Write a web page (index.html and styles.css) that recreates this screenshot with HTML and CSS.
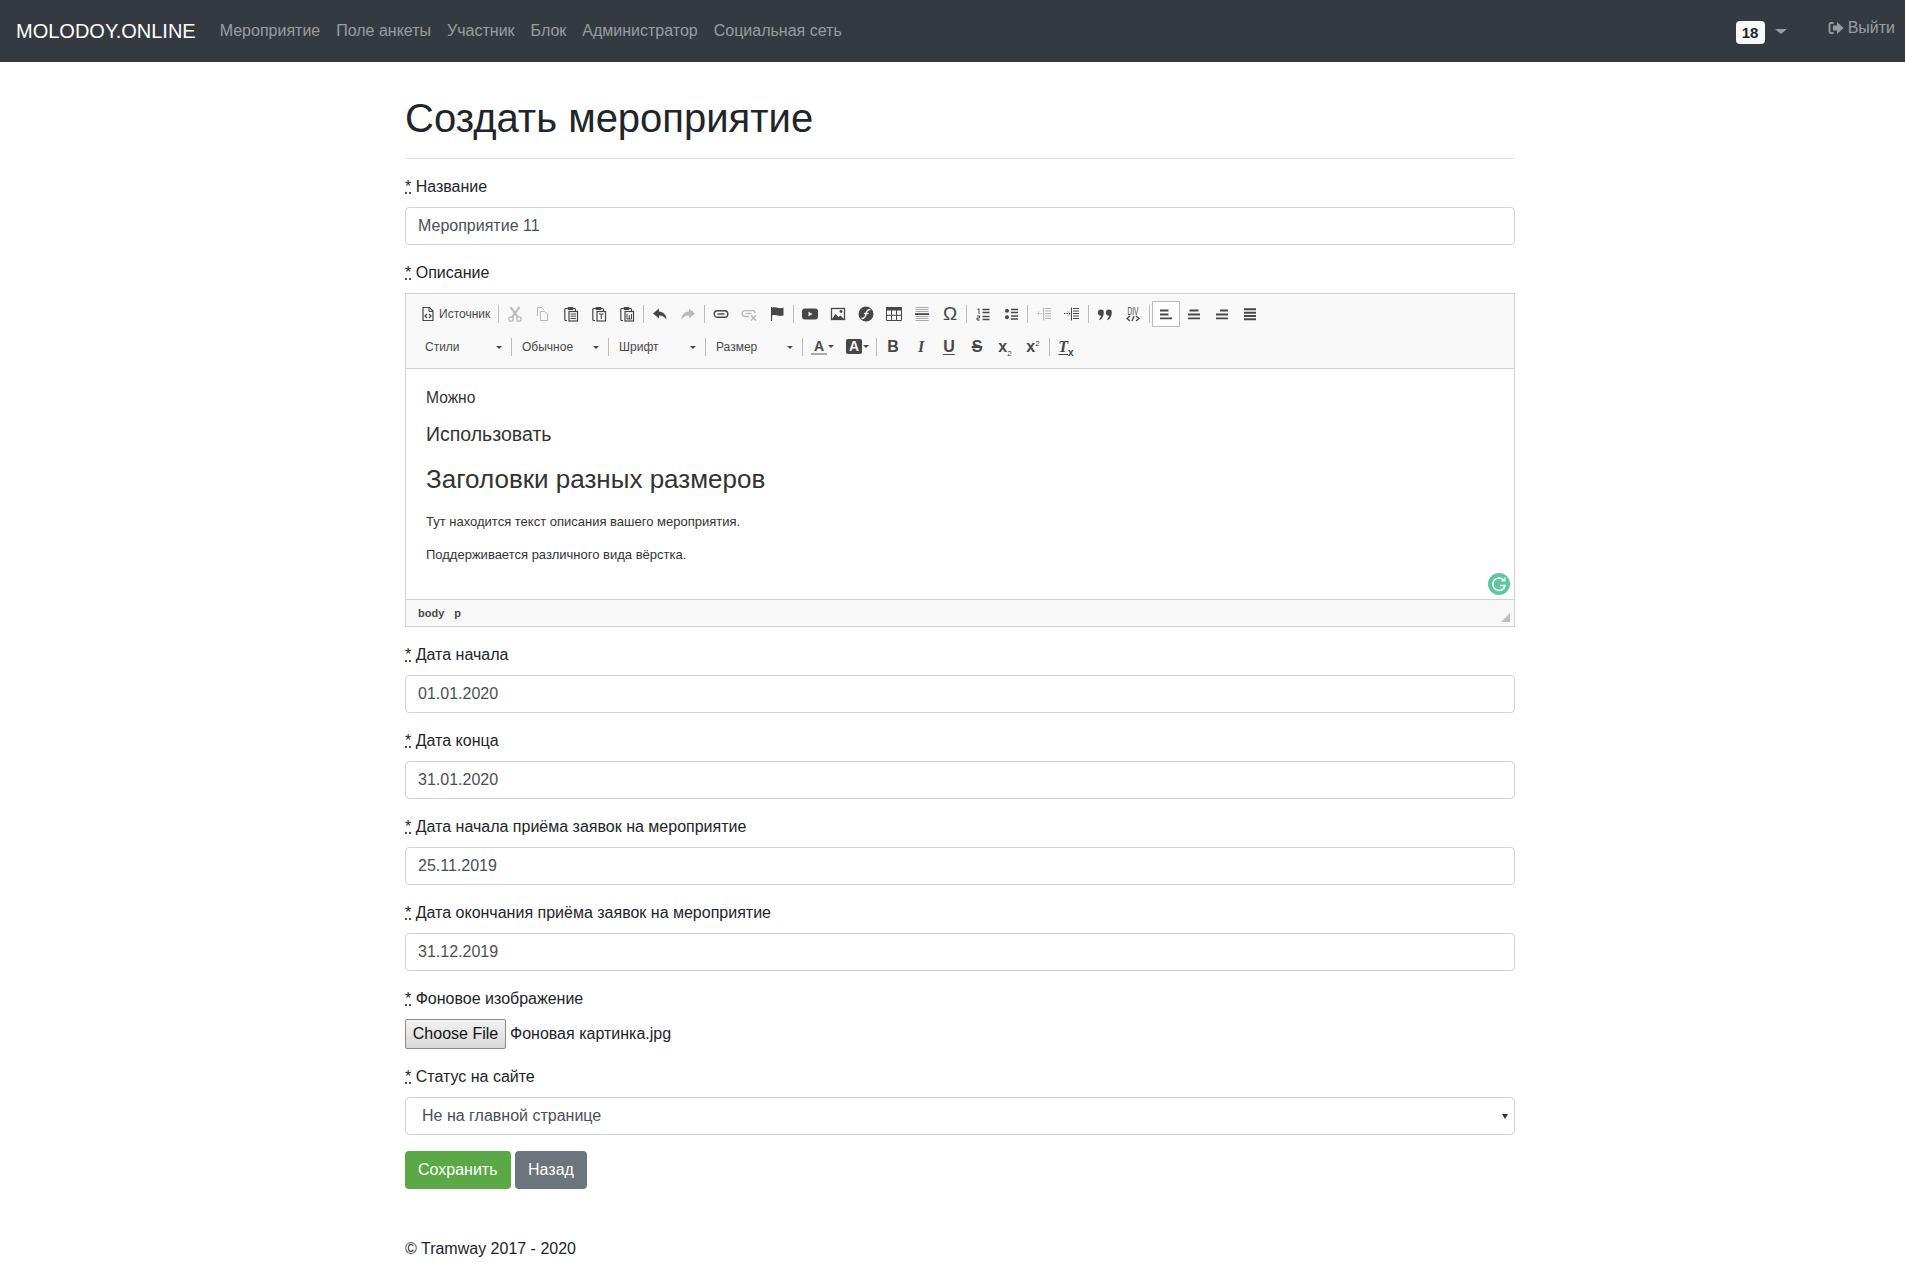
FILE: index.html
```html
<!DOCTYPE html>
<html lang="ru">
<head>
<meta charset="utf-8">
<title>Создать мероприятие</title>
<link rel="stylesheet" href="styles.css">
</head>
<body>
<svg class="sprite" width="0" height="0" aria-hidden="true">
<defs>
<symbol id="i-source" viewBox="0 0 16 16"><path d="M3 1.500h6.500L13 5v9.500H3z" fill="none" stroke="currentColor" stroke-width="1.200"/><path d="M9 1.500V5.500h4" fill="none" stroke="currentColor"/><path d="M7 8 5 10l2 2M9 8l2 2-2 2" fill="none" stroke="currentColor" stroke-width="1.300"/></symbol>
<symbol id="i-cut" viewBox="0 0 16 16"><circle cx="4" cy="13" r="2.200" fill="none" stroke="currentColor" stroke-width="1.300"/><circle cx="12" cy="13" r="2.200" fill="none" stroke="currentColor" stroke-width="1.300"/><path d="M5.200 11 12.500 1M10.800 11 3.500 1" stroke="currentColor" stroke-width="2" fill="none"/></symbol>
<symbol id="i-copy" viewBox="0 0 16 16"><path d="M2.500 10V1.500h4l2.500 2.500" fill="none" stroke="currentColor"/><path d="M5.500 5.500h4l3 3v6h-7z" fill="none" stroke="currentColor"/></symbol>
<symbol id="i-paste" viewBox="0 0 16 16"><path d="M4 14.500H2.800a1 1 0 0 1-1-1v-10a1 1 0 0 1 1-1H5M10 2.500h1.500a1 1 0 0 1 1 1V5" fill="none" stroke="currentColor" stroke-width="1.200"/><rect x="4.500" y="1" width="6" height="3" rx="1" fill="currentColor"/><rect x="6" y="5.500" width="8.500" height="9.500" fill="none" stroke="currentColor" stroke-width="1.200"/><path d="M7.500 8h5.500M7.500 10.200h5.500M7.500 12.500h5.500" stroke="currentColor"/></symbol>
<symbol id="i-paste-t" viewBox="0 0 16 16"><path d="M4 14.500H2.800a1 1 0 0 1-1-1v-10a1 1 0 0 1 1-1H5M10 2.500h1.500a1 1 0 0 1 1 1V5" fill="none" stroke="currentColor" stroke-width="1.200"/><rect x="4.500" y="1" width="6" height="3" rx="1" fill="currentColor"/><rect x="6" y="5.500" width="8.500" height="9.500" fill="none" stroke="currentColor" stroke-width="1.200"/><path d="M8 8h4.500M10.250 8v5" stroke="currentColor" stroke-width="1.100"/></symbol>
<symbol id="i-paste-w" viewBox="0 0 16 16"><path d="M4 14.500H2.800a1 1 0 0 1-1-1v-10a1 1 0 0 1 1-1H5M10 2.500h1.500a1 1 0 0 1 1 1V5" fill="none" stroke="currentColor" stroke-width="1.200"/><rect x="4.500" y="1" width="6" height="3" rx="1" fill="currentColor"/><rect x="6" y="5.500" width="8.500" height="9.500" fill="none" stroke="currentColor" stroke-width="1.200"/><path d="M8 8v5h4.500V8M10.250 9v4" fill="none" stroke="currentColor"/></symbol>
<symbol id="i-undo" viewBox="0 0 16 16"><path d="M7 2.500 1 7.500l6 5V9.500c3-.2 5 .8 7.500 4C14.500 9 11.500 6 7 5.500z" fill="currentColor"/></symbol>
<symbol id="i-redo" viewBox="0 0 16 16"><path d="M9 2.500l6 5-6 5V9.500c-3-.2-5 .8-7.500 4C1.500 9 4.500 6 9 5.500z" fill="currentColor"/></symbol>
<symbol id="i-link" viewBox="0 0 16 16"><rect x="1.200" y="4.700" width="13.600" height="6.600" rx="3.300" fill="none" stroke="currentColor" stroke-width="1.400"/><path d="M4.500 8h7" stroke="currentColor" stroke-width="1.400"/></symbol>
<symbol id="i-unlink" viewBox="0 0 16 16"><path d="M8 10.500H4a2.900 2.900 0 0 1 0-5.800h7.500a2.900 2.900 0 0 1 2.700 2.500" fill="none" stroke="currentColor" stroke-width="1.300"/><path d="M4.500 7.500h6" stroke="currentColor" stroke-width="1.200"/><path d="M10 9.500l5 5M15 9.500l-5 5" stroke="currentColor" stroke-width="1.500"/></symbol>
<symbol id="i-anchor" viewBox="0 0 16 16"><path d="M2.500 1v14" stroke="currentColor" stroke-width="1.100"/><path d="M3 1.800c2-.8 4-.5 5.500 0s3.500.7 6 0V9.500c-2.500.7-4.500.5-6 0S5 8.700 3 9.500z" fill="currentColor"/></symbol>
<symbol id="i-youtube" viewBox="0 0 16 16"><rect y="2.500" width="16" height="11" rx="3" fill="currentColor"/><path d="M6.500 5.800v4.400L10.500 8z" fill="#f8f8f8"/></symbol>
<symbol id="i-image" viewBox="0 0 16 16"><rect x="1.500" y="2.500" width="13" height="11" fill="none" stroke="currentColor" stroke-width="1.300"/><path d="M2 13l3.500-5 3 3 2-1.500 3.500 3.500z" fill="currentColor"/><circle cx="11" cy="5.500" r="1.400" fill="currentColor"/></symbol>
<symbol id="i-flash" viewBox="0 0 16 16"><circle cx="8" cy="8" r="7.500" fill="currentColor"/><path d="M12.500 3.500C9 3.500 8.500 5.500 8 8s-1 4.500-4.500 4.500" fill="none" stroke="#f8f8f8" stroke-width="1.600"/><path d="M6 7.500h4.500" stroke="#f8f8f8" stroke-width="1.300"/></symbol>
<symbol id="i-table" viewBox="0 0 16 16"><rect x="0" y="1" width="16" height="3.500" fill="currentColor"/><path d="M.5 1.500h15v13H.5zM.5 9.300h15M5.500 4v10.500M10.500 4v10.500" fill="none" stroke="currentColor"/></symbol>
<symbol id="i-hr" viewBox="0 0 16 16"><path d="M1.500 1.500h13M1.500 3.500h13M1.500 5.500h13M1.500 10.500h13M1.500 12.500h13M1.500 14.500h13" stroke="#a8a8a8"/><rect x="1" y="7.200" width="14" height="1.800" fill="currentColor"/></symbol>
<symbol id="i-ol" viewBox="0 0 16 16"><path d="M7.500 3.500h7M7.500 6.500h7M7.500 10.500h7M7.500 13.500h7" stroke="currentColor" stroke-width="1.300"/><path d="M2.500 3.500 4 2.800v5M2 10h2.500v2H2v2h2.800" fill="none" stroke="currentColor"/></symbol>
<symbol id="i-ul" viewBox="0 0 16 16"><circle cx="4" cy="4.700" r="2" fill="currentColor"/><circle cx="4" cy="11.300" r="2" fill="currentColor"/><path d="M8 3.500h7M8 6.500h7M8 10h7M8 13h7" stroke="currentColor" stroke-width="1.300"/></symbol>
<symbol id="i-outdent" viewBox="0 0 16 16"><path d="M9 2.500h6M9 5h6M9 7.500h6M9 10h6M9 12.500h6M7.500 1.500v13" stroke="currentColor"/><path d="M6 7.500H1M3 5.500l-2 2 2 2" fill="none" stroke="currentColor" stroke-dasharray="1.500 1"/></symbol>
<symbol id="i-indent" viewBox="0 0 16 16"><path d="M9 2.500h6M9 5h6M9 7.500h6M9 10h6M9 12.500h6M7.500 1.500v13" stroke="currentColor"/><path d="M0 7.500h6M4 5.500l2 2-2 2" fill="none" stroke="currentColor" stroke-dasharray="1.500 1"/></symbol>
<symbol id="i-quote" viewBox="0 0 16 16"><path d="M3.800 3.500a3 3 0 0 1 3 3.200c0 3-1.500 6-4 7.500l-.7-.8c1.300-1.300 1.800-2.500 2-3.900A3 3 0 0 1 3.800 3.500zM11.800 3.500a3 3 0 0 1 3 3.200c0 3-1.500 6-4 7.500l-.7-.8c1.300-1.300 1.800-2.500 2-3.900a3 3 0 0 1-.3-6z" fill="currentColor"/></symbol>
<symbol id="i-div" viewBox="0 0 16 16"><text x="2.500" y="8.500" textLength="11" lengthAdjust="spacingAndGlyphs" class="tiny">DIV</text><path d="M5 10 2 12.500 5 15M11 10l3 2.500-3 2.500M9 10l-2 5" fill="none" stroke="currentColor" stroke-width="1.300"/></symbol>
<symbol id="i-left" viewBox="0 0 16 16"><path d="M2 4.500h8.500M2 8.500h8.500M2 12.300h12" stroke="currentColor" stroke-width="1.800"/></symbol>
<symbol id="i-center" viewBox="0 0 16 16"><path d="M3.500 4.500h9M2 8.500h12M2 12.300h12" stroke="currentColor" stroke-width="1.800"/></symbol>
<symbol id="i-right" viewBox="0 0 16 16"><path d="M6 4.500h8M2 8.500h12M2 12.300h12" stroke="currentColor" stroke-width="1.800"/></symbol>
<symbol id="i-justify" viewBox="0 0 16 16"><path d="M2 3.300h12M2 6.700h12M2 10h12M2 13.300h12" stroke="currentColor" stroke-width="2"/></symbol>
<symbol id="i-logout" viewBox="0 0 16 14"><path d="M5.500 2H3a1.500 1.500 0 0 0-1.500 1.500v7A1.500 1.500 0 0 0 3 12h2.500" fill="none" stroke="currentColor" stroke-width="1.800"/><path d="M9 1 15.500 7 9 13V9.500H5v-5h4z" fill="currentColor"/></symbol>
</defs>
</svg>

<nav class="navbar">
  <a class="brand" href="#">MOLODOY.ONLINE</a>
  <a class="nav-link" href="#">Мероприятие</a>
  <a class="nav-link" href="#">Поле анкеты</a>
  <a class="nav-link" href="#">Участник</a>
  <a class="nav-link" href="#">Блок</a>
  <a class="nav-link" href="#">Администратор</a>
  <a class="nav-link" href="#">Социальная сеть</a>
  <div class="nav-right">
    <span class="badge">18</span>
    <span class="caret"></span>
    <a class="logout" href="#"><svg class="logout-icon"><use href="#i-logout"/></svg>Выйти</a>
  </div>
</nav>

<main class="page">
  <h1 class="title">Создать мероприятие</h1>
  <form class="form">
    <div class="field"><label class="label"><abbr class="req" title="required">*</abbr> Название</label><input class="input" value="Мероприятие 11"></div>

    <div class="field field-editor">
      <label class="label"><abbr class="req" title="required">*</abbr> Описание</label>
      <div class="editor">
        <div class="toolbar">
          <div class="row">
            <a class="btn btn-source"><svg class="ic"><use href="#i-source"/></svg><span class="btn-text">Источник</span></a>
            <i class="sep"></i>
            <a class="btn off"><svg class="ic"><use href="#i-cut"/></svg></a>
            <a class="btn off"><svg class="ic"><use href="#i-copy"/></svg></a>
            <a class="btn"><svg class="ic"><use href="#i-paste"/></svg></a>
            <a class="btn"><svg class="ic"><use href="#i-paste-t"/></svg></a>
            <a class="btn"><svg class="ic"><use href="#i-paste-w"/></svg></a>
            <i class="sep"></i>
            <a class="btn"><svg class="ic"><use href="#i-undo"/></svg></a>
            <a class="btn off"><svg class="ic"><use href="#i-redo"/></svg></a>
            <i class="sep"></i>
            <a class="btn"><svg class="ic"><use href="#i-link"/></svg></a>
            <a class="btn off"><svg class="ic"><use href="#i-unlink"/></svg></a>
            <a class="btn"><svg class="ic"><use href="#i-anchor"/></svg></a>
            <i class="sep"></i>
            <a class="btn"><svg class="ic"><use href="#i-youtube"/></svg></a>
            <a class="btn"><svg class="ic"><use href="#i-image"/></svg></a>
            <a class="btn"><svg class="ic"><use href="#i-flash"/></svg></a>
            <a class="btn"><svg class="ic"><use href="#i-table"/></svg></a>
            <a class="btn"><svg class="ic"><use href="#i-hr"/></svg></a>
            <a class="btn"><span class="glyph glyph-omega">Ω</span></a>
            <i class="sep"></i>
            <a class="btn"><svg class="ic"><use href="#i-ol"/></svg></a>
            <a class="btn"><svg class="ic"><use href="#i-ul"/></svg></a>
            <i class="sep"></i>
            <a class="btn off"><svg class="ic"><use href="#i-outdent"/></svg></a>
            <a class="btn"><svg class="ic"><use href="#i-indent"/></svg></a>
            <i class="sep"></i>
            <a class="btn"><svg class="ic"><use href="#i-quote"/></svg></a>
            <a class="btn"><svg class="ic"><use href="#i-div"/></svg></a>
            <i class="sep"></i>
            <a class="btn on"><svg class="ic"><use href="#i-left"/></svg></a>
            <a class="btn"><svg class="ic"><use href="#i-center"/></svg></a>
            <a class="btn"><svg class="ic"><use href="#i-right"/></svg></a>
            <a class="btn"><svg class="ic"><use href="#i-justify"/></svg></a>
          </div>
          <div class="row">
            <a class="combo"><span>Стили</span><b class="arrow"></b></a>
            <i class="sep"></i>
            <a class="combo"><span>Обычное</span><b class="arrow"></b></a>
            <i class="sep"></i>
            <a class="combo"><span>Шрифт</span><b class="arrow"></b></a>
            <i class="sep"></i>
            <a class="combo"><span>Размер</span><b class="arrow"></b></a>
            <i class="sep"></i>
            <a class="btn btn-color"><span class="glyph glyph-a">A</span><b class="arrow arrow-color"></b></a>
            <a class="btn btn-color btn-color-bg"><span class="glyph glyph-bg">A</span><b class="arrow arrow-color"></b></a>
            <i class="sep"></i>
            <a class="btn"><span class="glyph glyph-b">B</span></a>
            <a class="btn"><span class="glyph glyph-i">I</span></a>
            <a class="btn"><span class="glyph glyph-u">U</span></a>
            <a class="btn"><span class="glyph glyph-s">S</span></a>
            <a class="btn"><span class="glyph glyph-x">x<sub>2</sub></span></a>
            <a class="btn"><span class="glyph glyph-x">x<sup>2</sup></span></a>
            <i class="sep"></i>
            <a class="btn"><span class="glyph glyph-i glyph-tx"><span class="tx-t">T</span><sub class="clear-x">x</sub></span></a>
          </div>
        </div>
        <div class="content">
          <p class="c-normal">Можно</p>
          <h3 class="c-h3">Использовать</h3>
          <h2 class="c-h2">Заголовки разных размеров</h2>
          <p class="c-small">Тут находится текст описания вашего мероприятия.</p>
          <p class="c-small">Поддерживается различного вида вёрстка.</p>
          <span class="grammarly"><svg class="grammarly-g" viewBox="0 0 22 22"><path d="M16 7.500a6.200 6.200 0 1 0 1.100 5H12" fill="none" stroke="#fff" stroke-width="1.500"/><path d="M16.800 4.500v3.500h-3.500" fill="none" stroke="#fff" stroke-width="1.200"/></svg></span>
        </div>
        <div class="statusbar"><span>body</span><span>p</span><i class="resize"></i></div>
      </div>
    </div>

    <div class="field"><label class="label"><abbr class="req" title="required">*</abbr> Дата начала</label><input class="input" value="01.01.2020"></div>
    <div class="field"><label class="label"><abbr class="req" title="required">*</abbr> Дата конца</label><input class="input" value="31.01.2020"></div>
    <div class="field"><label class="label"><abbr class="req" title="required">*</abbr> Дата начала приёма заявок на мероприятие</label><input class="input" value="25.11.2019"></div>
    <div class="field"><label class="label"><abbr class="req" title="required">*</abbr> Дата окончания приёма заявок на мероприятие</label><input class="input" value="31.12.2019"></div>
    <div class="field field-file"><label class="label"><abbr class="req" title="required">*</abbr> Фоновое изображение</label>
      <div class="file"><button type="button" class="file-btn">Choose File</button><span class="file-name">Фоновая картинка.jpg</span></div>
    </div>
    <div class="field"><label class="label"><abbr class="req" title="required">*</abbr> Статус на сайте</label>
      <div class="select"><span>Не на главной странице</span><b class="select-arrow"></b></div>
    </div>
    <div class="actions">
      <button type="button" class="action action-save">Сохранить</button>
      <button type="button" class="action action-back">Назад</button>
    </div>
  </form>
  <footer class="footer">© Tramway 2017 - 2020</footer>
</main>
</body>
</html>
```
FILE: styles.css
```css
* { box-sizing: border-box; }
html, body { margin: 0; padding: 0; }
body {
  font-family: "Liberation Sans", Arial, sans-serif;
  font-size: 16px;
  line-height: 24px;
  color: #212529;
  background: #fff;
  overflow-x: hidden;
}
a { text-decoration: none; }
.sprite { position: absolute; }

.navbar {
  display: flex;
  align-items: center;
  height: 62px;
  padding: 0 10px 0 16px;
  background: #343a40;
}
.brand { font-size: 20px; color: #fff; margin-right: 16px; line-height: 30px; }
.nav-link { color: rgba(255,255,255,.5); padding: 0 8px; }
.nav-right { margin-left: auto; display: flex; align-items: center; }
.badge {
  display: block;
  width: 29px;
  height: 23px;
  margin-top: 3px;
  background: #f8f9fa;
  color: #212529;
  border-radius: 4px;
  font-size: 15px;
  line-height: 24px;
  font-weight: 700;
  text-align: center;
}
.caret {
  width: 0; height: 0;
  margin: 0 41px 0 10px;
  border-top: 5px solid rgba(255,255,255,.5);
  border-left: 6px solid transparent;
  border-right: 6px solid transparent;
}
.logout { display: flex; align-items: center; color: rgba(255,255,255,.5); margin-top: -7px; }
.logout-icon { width: 16px; height: 14px; margin-right: 4px; }

.page { width: 1110px; margin-left: 405px; }
.title {
  margin: 0;
  padding: 32px 0 17px;
  height: 97px;
  font-size: 40px;
  line-height: 48px;
  font-weight: 500;
  border-bottom: 1px solid #e2e2e2;
  margin-bottom: 16px;
}
.field { margin-bottom: 16px; }
.label { display: block; margin-bottom: 8px; }
.req { text-decoration: underline dotted; }
.input {
  display: block;
  width: 100%;
  height: 38px;
  padding: 6px 12px;
  border: 1px solid #ced4da;
  border-radius: 4px;
  font: inherit;
  color: #495057;
  background: #fff;
}

.editor { border: 1px solid #d1d1d1; height: 334px; display: flex; flex-direction: column; }
.toolbar {
  height: 75px;
  padding: 3px 8px 0 11px;
  background: #f8f8f8;
  border-bottom: 1px solid #d1d1d1;
}
.row { display: flex; align-items: center; height: 33px; }
.btn {
  display: flex;
  align-items: center;
  justify-content: center;
  position: relative;
  flex: none;
  width: 28px;
  height: 26px;
  color: #474747;
}
.btn.off { color: #b8b8b8; }
.btn.on { border: 1px solid #bcbcbc; background: #fff; }
.btn-source { width: 79px; justify-content: flex-start; padding-left: 3px; }
.btn-text { font-size: 12px; line-height: 16px; margin-left: 3px; color: #484848; }
.ic { width: 16px; height: 16px; flex: none; display: block; }
.tiny { font: 10px "Liberation Sans", sans-serif; fill: currentColor; }
.sep { flex: none; width: 1px; height: 18px; background: #bcbcbc; margin: 0 2px; }
.combo {
  flex: none;
  position: relative;
  width: 92px;
  height: 24px;
  padding-left: 8px;
  font-size: 12px;
  line-height: 24px;
  color: #484848;
}
.arrow {
  position: absolute;
  right: 7px;
  top: 11px;
  width: 0; height: 0;
  border-top: 3px solid #474747;
  border-left: 3px solid transparent;
  border-right: 3px solid transparent;
}
.btn-color { width: 35px; justify-content: flex-start; padding-left: 6px; }
.btn-color-bg { width: 34px; }
.btn-color .arrow-color { right: 6px; top: 11px; }
.btn-color-bg .arrow-color { right: 5px; }
.glyph { display: block; width: 16px; text-align: center; color: #474747; font-size: 16px; line-height: 16px; font-weight: 700; }
.glyph-omega { font-weight: 400; font-size: 19px; }
.glyph-a { border-bottom: 2px solid #aaa; line-height: 14px; font-size: 14px; height: 16px; }
.glyph-bg { background: #474747; color: #f8f8f8; font-size: 14px; line-height: 15px; height: 15px; border-radius: 2px; }
.glyph-i { font-style: italic; font-family: "Liberation Serif", serif; }
.glyph-u { text-decoration: underline; text-underline-offset: 2px; }
.glyph-s { text-decoration: line-through; text-decoration-thickness: 1.500px; }
.glyph-x { font-size: 16px; white-space: nowrap; }
.glyph-x sub, .glyph-x sup { font-size: 8px; line-height: 0; font-weight: 400; }
.tx-t { text-decoration: underline; text-underline-offset: 2px; }
.clear-x { font-size: 10px; line-height: 0; font-style: normal; font-family: "Liberation Sans", sans-serif; display: inline-block; }

.content { position: relative; flex: 1; padding: 18px 20px 0; font-size: 13px; color: #333; }
.content p, .content h2, .content h3 { margin: 0; font-weight: 400; }
.c-normal { font-size: 15.600px; line-height: 22px; height: 22px; margin-bottom: 13px !important; }
.c-h3 { font-size: 19.500px; line-height: 24px; margin-bottom: 18px !important; }
.c-h2 { font-size: 26px; line-height: 30px; margin-bottom: 18px !important; }
.c-small { font-size: 13px; line-height: 20px; margin-bottom: 13px !important; }
.grammarly {
  position: absolute;
  right: 4px;
  bottom: 4px;
  width: 22px;
  height: 22px;
  border-radius: 50%;
  background: #5fc79f;
}
.grammarly-g { display: block; width: 22px; height: 22px; }
.statusbar {
  position: relative;
  display: flex;
  gap: 10px;
  align-items: center;
  height: 27px;
  padding-left: 12px;
  background: #f8f8f8;
  border-top: 1px solid #d1d1d1;
  font-size: 11px;
  font-weight: 700;
  color: #484848;
}
.resize {
  position: absolute;
  right: 4px;
  bottom: 4px;
  width: 0; height: 0;
  border-bottom: 9px solid #bdbdbd;
  border-left: 9px solid transparent;
}

.file { display: flex; align-items: center; height: 30px; }
.file-btn {
  width: 101px;
  height: 30px;
  padding: 0;
  font: inherit;
  color: #111;
  background: linear-gradient(#f2f2f2, #d8d8d8);
  border: 1px solid #8a8a8a;
  border-radius: 2px;
}
.file-name { margin-left: 4px; }
.field-file { margin-bottom: 16px; }
.select {
  position: relative;
  height: 38px;
  padding: 6px 16px;
  border: 1px solid #ced4da;
  border-radius: 4px;
  color: #495057;
}
.select-arrow {
  position: absolute;
  right: 6px;
  top: 16px;
  width: 0; height: 0;
  border-top: 5px solid #333;
  border-left: 3px solid transparent;
  border-right: 3px solid transparent;
}
.actions { display: flex; gap: 4px; }
.action {
  height: 38px;
  padding: 0 13px;
  border: 0;
  border-radius: 4px;
  font: inherit;
  color: #fff;
}
.action-save { background: #5aa946; }
.action-back { background: #6c757d; padding: 0 13.500px; }
.footer { margin-top: 48px; }
```
